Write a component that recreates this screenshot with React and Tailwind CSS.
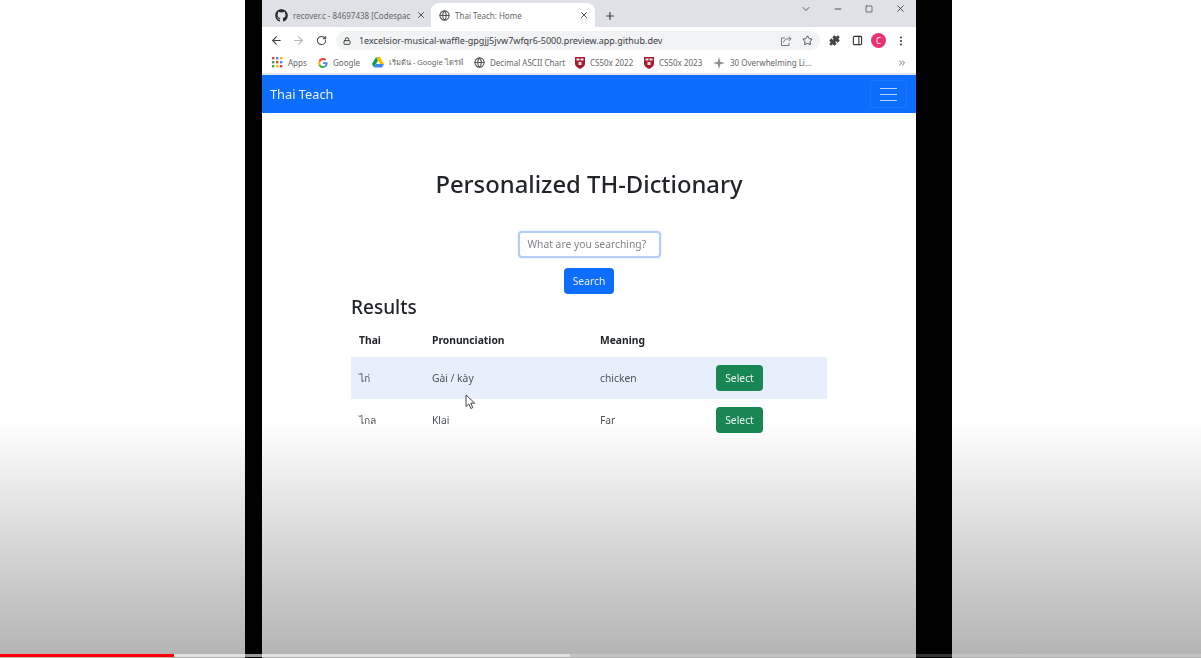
import React from 'react';
import { ArrowLeft, ArrowRight, RotateCw, Lock, Star, Puzzle, PanelRight, EllipsisVertical, ChevronDown, Minus, Square, X, Plus, Globe, ChevronsRight } from 'lucide-react';
import { FaGithub } from 'react-icons/fa';

const AppsIcon = () => (
  <svg width="11" height="11" viewBox="0 0 11 11">
    {[0, 4, 8].map((y, r) =>
      [0, 4, 8].map((x, c) => (
        <rect key={`${r}-${c}`} x={x} y={y} width="2.4" height="2.4" fill={['#ea4335', '#4285f4', '#fbbc05', '#34a853', '#ea4335', '#4285f4', '#34a853', '#fbbc05', '#ea4335'][r * 3 + c]} />
      ))
    )}
  </svg>
);

const GoogleIcon = () => (
  <svg width="10" height="10" viewBox="0 0 24 24">
    <path fill="#4285f4" d="M23 12.300c0-.8-.1-1.600-.2-2.300H12v4.400h6.200c-.3 1.400-1.100 2.600-2.300 3.400v2.800h3.700c2.100-2 3.400-4.900 3.400-8.300z" />
    <path fill="#34a853" d="M12 24c3.100 0 5.700-1 7.600-2.800l-3.700-2.800c-1 .7-2.300 1.100-3.900 1.100-3 0-5.500-2-6.400-4.700H1.800v2.900C3.700 21.400 7.600 24 12 24z" />
    <path fill="#fbbc05" d="M5.600 14.800c-.5-1.400-.5-3 0-4.500V7.400H1.800c-1.600 3.100-1.600 6.900 0 10.100l3.800-2.700z" />
    <path fill="#ea4335" d="M12 4.800c1.700 0 3.200.6 4.400 1.700l3.300-3.300C17.700 1.300 15.100 0 12 0 7.600 0 3.700 2.600 1.800 6.400l3.800 2.900c.9-2.600 3.400-4.500 6.400-4.500z" />
  </svg>
);

const DriveIcon = () => (
  <svg width="12" height="11" viewBox="0 0 24 22">
    <path fill="#fbbc05" d="M8 0h8l8 14h-8z" />
    <path fill="#0f9d58" d="M8 0L0 14l4 7 8-14z" />
    <path fill="#4285f4" d="M4 21h16l4-7H8z" />
  </svg>
);

const ShieldIcon = () => (
  <svg width="10" height="12" viewBox="0 0 10 12">
    <path fill="#a51c30" d="M0 0h10v6.500C10 9.500 7 11 5 12 3 11 0 9.500 0 6.500z" />
    <path fill="#f5e6e6" d="M1.500 1.500h3v2h-3zM5.500 1.500h3v2h-3zM3.500 5h3v3h-3z" />
  </svg>
);

const SparkIcon = () => (
  <svg width="12" height="12" viewBox="0 0 12 12" fill="#8a8f94">
    <path d="M6 0l1.300 4.700L12 6 7.300 7.300 6 12 4.700 7.300 0 6l4.700-1.300z" />
  </svg>
);

// chrome's share button: open box with an arrow going out to the right
const ShareBoxIcon = () => (
  <svg width="12" height="12" viewBox="0 0 12 12" fill="none" stroke="#777" strokeWidth="1">
    <path d="M5 3H1.500v7.500h7.500V8" />
    <path d="M3.500 7.500C4 5 6 3.800 8 3.800h3M8.800 1.500L11 3.800 8.800 6" />
  </svg>
);

const CursorIcon = () => (
  <svg width="11" height="16" viewBox="0 0 11 16" className="absolute left-[465px] top-[394px]">
    <path d="M1 1v11.500l2.800-2.600 2 4.600 2-.9-2-4.500h3.900z" fill="#fff" stroke="#444" strokeWidth="1" strokeLinejoin="round" />
  </svg>
);

const bookmarks = [
  { icon: <AppsIcon />, label: 'Apps', w: 'w-[46px]' },
  { icon: <GoogleIcon />, label: 'Google', w: 'w-[54px]' },
  { icon: <DriveIcon />, label: 'เริ่มต้น - Google ไดรฟ์', w: 'w-[102px]', size: 'text-[7.5px]' },
  { icon: <Globe size={11} strokeWidth={2.4} className="text-[#555]" />, label: 'Decimal ASCII Chart', w: 'w-[101px]' },
  { icon: <ShieldIcon />, label: 'CS50x 2022', w: 'w-[69px]' },
  { icon: <ShieldIcon />, label: 'CS50x 2023', w: 'w-[69px]' },
  { icon: <SparkIcon />, label: '30 Overwhelming Li...', w: 'w-[110px]' },
];

const rows = [
  { thai: 'ไก่', pron: 'Gài / kày', meaning: 'chicken', active: true },
  { thai: 'ไกล', pron: 'Klai', meaning: 'Far', active: false },
];

function BrowserChrome() {
  return (
    <div className="text-[#5f6368]">
      {/* Tab strip */}
      <div className="h-[27px] bg-[#dee1e6] flex items-end pl-[4px]">
        <div className="w-[165px] h-[24px] flex items-center pl-[9px] pr-[5px] gap-[5px] text-[8px] text-[#666]">
          <FaGithub size={13} className="text-[#24292f] shrink-0" />
          <span className="flex-1 whitespace-nowrap pt-[1px]">recover.c - 84697438 [Codespac</span>
          <X size={10} strokeWidth={2.2} className="text-[#444] shrink-0" />
        </div>
        <div className="w-[164px] h-[24px] bg-white rounded-t-lg flex items-center pl-[8px] pr-[6px] gap-[5px] text-[8px] text-[#666]">
          <Globe size={11} strokeWidth={2.4} className="text-[#555] shrink-0" />
          <span className="flex-1 whitespace-nowrap pt-[1px]">Thai Teach: Home</span>
          <X size={10} strokeWidth={2.2} className="text-[#444] shrink-0" />
        </div>
        <Plus size={12} strokeWidth={2.4} className="text-[#3c4043] ml-[9px] mb-[5px]" />
        <div className="flex-1 flex items-center self-start justify-end h-[17px] pr-[10px]">
          <ChevronDown size={12} className="text-[#555] mr-[21px]" />
          <Minus size={10} strokeWidth={2} className="text-[#333] mr-[22px]" />
          <Square size={8} strokeWidth={2} className="text-[#333] mr-[22px]" />
          <X size={11} strokeWidth={1.8} className="text-[#333]" />
        </div>
      </div>
      {/* Toolbar */}
      <div className="h-[25px] bg-white flex items-center pl-[8px] pr-[9px] pt-[2px]">
        <ArrowLeft size={13} strokeWidth={2} className="text-[#444]" />
        <ArrowRight size={13} strokeWidth={2} className="text-[#b5b7ba] ml-[9px]" />
        <RotateCw size={11} strokeWidth={2.2} className="text-[#444] ml-[11px]" />
        <div className="ml-[9px] w-[485px] h-[19px] rounded-full bg-[#f1f3f4] flex items-center pl-[7px] pr-[7px]">
          <Lock size={8} strokeWidth={3} className="text-[#444]" />
          <span className="ml-[8px] flex-1 text-[9px] text-[#3c4043] whitespace-nowrap">1excelsior-musical-waffle-gpgjj5jvw7wfqr6-5000.preview.app.github.dev</span>
          <ShareBoxIcon />
          <Star size={11} strokeWidth={2} className="text-[#444] ml-[10px]" />
        </div>
        <Puzzle size={11} fill="#444" className="text-[#444] ml-[9px]" />
        <PanelRight size={11} strokeWidth={2.4} className="text-[#333] ml-[12px]" />
        <div className="ml-[8px] w-[15px] h-[15px] rounded-full bg-[#e8336d] text-white text-[8px] flex items-center justify-center">C</div>
        <EllipsisVertical size={12} strokeWidth={2.4} className="text-[#444] ml-[9px]" />
      </div>
      {/* Bookmarks */}
      <div className="h-[21px] bg-white flex items-center pl-[10px] pr-[9px] text-[8px] text-[#666]">
        {bookmarks.map((b) => (
          <div key={b.label} className={`${b.w} ${b.size || ''} shrink-0 flex items-center gap-[5px] whitespace-nowrap`}>
            {b.icon}
            <span>{b.label}</span>
          </div>
        ))}
        <ChevronsRight size={10} className="ml-auto text-[#555]" />
      </div>
      <div className="h-[2px] bg-[#e4e6e8]" />
    </div>
  );
}

function Navbar() {
  return (
    <div className="h-[38px] bg-[#0d6efd] flex items-center justify-between pl-[8px] pr-[9px]">
      <span className="text-[12.800px] text-[#eaf2ff] pt-[2px]">Thai Teach</span>
      <div className="w-[37px] h-[28px] rounded border border-[#1c77fd] flex flex-col items-center justify-center gap-[5px]">
        <div className="w-[17px] h-px bg-[#b5d3fe]" />
        <div className="w-[17px] h-px bg-[#b5d3fe]" />
        <div className="w-[17px] h-px bg-[#b5d3fe]" />
      </div>
    </div>
  );
}

function Results() {
  return (
    <div className="w-[476px] self-center">
      <h2 className="text-[19px] leading-[26px] font-medium text-[#212529]">Results</h2>
      <table className="w-full mt-[5px] table-fixed border-collapse text-[10.3px]">
        <colgroup>
          <col className="w-[73px]" />
          <col className="w-[168px]" />
          <col className="w-[116px]" />
          <col className="w-[119px]" />
        </colgroup>
        <thead>
          <tr className="h-[32px] text-left text-[#212529]">
            <th className="pl-[8px] font-bold">Thai</th>
            <th className="pl-[8px] font-bold">Pronunciation</th>
            <th className="pl-[8px] font-bold">Meaning</th>
            <th />
          </tr>
        </thead>
        <tbody>
          {rows.map((r) => (
            <tr key={r.thai} className={`h-[42px] text-[#4d5358] ${r.active ? 'bg-[#e8effc]' : ''}`}>
              <td className="pl-[8px] pt-[1px]">{r.thai}</td>
              <td className="pl-[8px] pt-[1px]">{r.pron}</td>
              <td className="pl-[8px] pt-[1px]">{r.meaning}</td>
              <td className="pl-[8px]">
                <button className="w-[47px] h-[26px] rounded bg-[#198754] text-[#e8f3ed] text-[10.3px] pt-[1px] block">Select</button>
              </td>
            </tr>
          ))}
        </tbody>
      </table>
    </div>
  );
}

export default function App() {
  return (
    <div className="relative w-[1201px] h-[658px] overflow-hidden flex bg-white font-['Noto_Sans','Open_Sans',sans-serif]">
      <div className="w-[245px] shrink-0" />
      <div className="w-[17px] shrink-0 bg-black" />
      <div className="w-[654px] shrink-0 flex flex-col blur-[0.4px]">
        <BrowserChrome />
        <Navbar />
        <main className="flex-1 flex flex-col items-center pt-[55px]">
          <h1 className="text-[23.800px] leading-[32px] font-medium text-[#212529]">Personalized TH-Dictionary</h1>
          <div className="mt-[31px] w-[143px] h-[27px] rounded bg-white border-2 border-[#b3cdf7] shadow-[0_0_2px_#c9dcfb] flex items-center pl-[8px] text-[10.3px] text-[#808488] whitespace-nowrap">
            What are you searching?
          </div>
          <button className="mt-[10px] w-[50px] h-[26px] rounded bg-[#0d6efd] text-[#e6f0ff] text-[10.3px] pt-[1px]">Search</button>
          <Results />
        </main>
      </div>
      <div className="w-[36px] shrink-0 bg-black" />
      <div className="flex-1" />

      {/* player gradient over the video, multiply keeps the black bars black */}
      <div className="absolute inset-x-0 bottom-0 h-[236px] mix-blend-multiply bg-gradient-to-b from-white to-[#b3b3b3] pointer-events-none" />

      {/* mouse cursor in the recording */}
      <CursorIcon />

      {/* progress bar */}
      <div className="absolute left-0 right-0 bottom-px h-[3px] bg-[#ffffff33] flex">
        <div className="w-[174px] bg-[#ff0000]" />
        <div className="w-[396px] bg-[#ffffff80]" />
      </div>
    </div>
  );
}
